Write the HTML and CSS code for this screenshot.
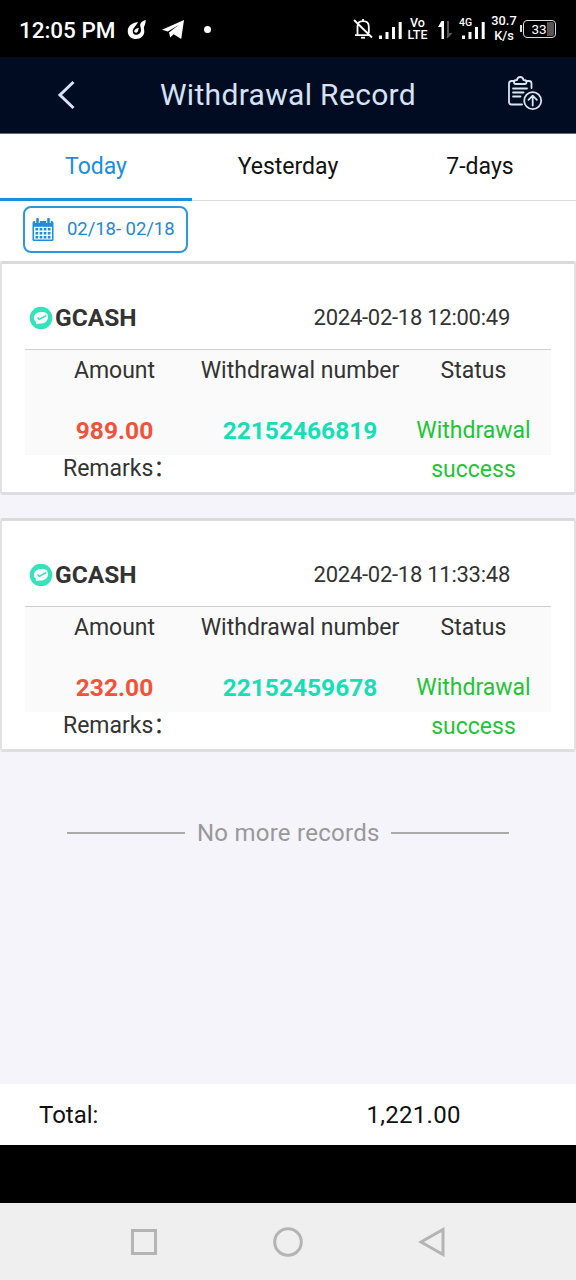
FILE: index.html
```html
<!DOCTYPE html>
<html lang="en">
<head>
<meta charset="utf-8">
<title>Withdrawal Record</title>
<link rel="stylesheet" href="styles.css">
</head>
<body>
<div class="status-bar">
  <span class="clock">12:05 PM</span>
  <svg class="flame" width="20" height="22" viewBox="0 0 20 22"><path d="M18.800 1C14 2.500 12.500 4.500 13.500 8c.8 3 1 6-2.500 7.500-3.500 1-6-1-5-4.500C6.600 8.500 9 7 11 3 4 4 .5 7.500.8 13c.3 4.500 4 7 8 7 5 0 8.700-3.500 8.500-8-.1-2-.7-3-.2-4.500C18 6 18.600 4 18.800 1z" fill="#fff"/><path d="M7 12.500c.5-2 2.500-3.500 5-3.500-1 1.500-.5 2.500-1.500 4-1 1-2 1-3.500-.5z" fill="#fff"/></svg>
  <svg class="plane" width="24" height="22" viewBox="0 0 24 22"><path d="M1 10.800 23 1l-2.800 19-7.500-4.800-3.500 3.300-1.200-5L17.500 6 6.800 12.600z" fill="#fff"/></svg>
  <i class="dot"></i>
  <div class="indicators">
    <svg class="bell" width="20" height="22" viewBox="0 0 20 22" fill="none" stroke="#fff" stroke-width="1.800"><path d="M2 17.200h15M4.500 17V8.500C4.500 5 6.500 3.200 10 3.200s5.800 2 5.800 5.300V15M10 3V1M1 2l18 17.500"/><path d="M8 19.700h4"/></svg>
    <svg class="bars" width="23" height="19" viewBox="0 0 23 19" fill="#fff"><path d="M0 14.500h3V18H0zM6.500 11h3v7h-3zM13 6h3v12h-3zM19.700 1h3v17h-3z"/></svg>
    <div class="stack volte"><span>Vo</span><span>LTE</span></div>
    <svg class="updown" width="15" height="20" viewBox="0 0 15 20"><path d="M3.500 1H6v18H3.500V7H0z" fill="#fff"/><path d="M9 1h2v12h3.500L9 19z" fill="#555"/></svg>
    <div class="mobile"><span>4G</span><svg width="23" height="19" viewBox="0 0 23 19" fill="#fff"><path d="M0 14.500h3V18H0zM6.500 11h3v7h-3zM13 6h3v12h-3zM19.700 1h3v17h-3z"/></svg></div>
    <div class="stack speed"><span>30.7</span><span>K/s</span></div>
    <div class="battery"><span>33</span></div>
  </div>
</div>

<header class="header">
  <svg class="back" width="20" height="30" viewBox="0 0 20 30"><path d="M18.500 2 5 15l13.500 13" fill="none" stroke="#d5e2f7" stroke-width="3"/></svg>
  <h1>Withdrawal Record</h1>
  <svg class="report" width="36" height="36" viewBox="0 0 36 36" fill="none" stroke="#d9e5f0" stroke-width="1.800" stroke-linecap="round" stroke-linejoin="round"><path d="M7 5H4.500Q2 5 2 7.500V26q0 2.500 2.500 2.500H15M19.500 5H22q2.500 0 2.500 2.500V12M7 6.500Q7 4 9.500 4H10Q10.500 1 13.200 1T16.500 4h.5q2.500 0 2.500 2.500Q19.500 8 18 8H8.500Q7 8 7 6.500zM6 12.500h14M6 16.500h10.500M6 20.500h7.500"/><circle cx="25.700" cy="24.700" r="8.500"/><path d="M25.700 29.500V20M21.500 23.800l4.200-4.200 4.200 4.200"/></svg>
</header>

<nav class="tabs"><span class="tab active">Today</span><span class="tab">Yesterday</span><span class="tab">7-days</span></nav>

<div class="filter">
  <div class="date-range">
    <svg width="22" height="24" viewBox="0 0 22 24"><path d="M2.500 3h17Q21.500 3 21.500 5v16.500q0 1.500-1.500 1.500H2Q.5 23 .5 21.500V5q0-2 2-2z" fill="#1c8edb"/><path d="M2 8.800h18v12.700H2z" fill="#fff"/><path d="M5.500 0v5M16.500 0v5" stroke="#fff" stroke-width="4.500"/><path d="M5.500 1v3.500M16.500 1v3.500" stroke="#1c8edb" stroke-width="2.600" stroke-linecap="round"/><path d="M3.500 11.200h15M3.500 15.200h15M3.500 19.200h15" stroke="#1c8edb" stroke-width="2.500" stroke-dasharray="2.700 1.400"/></svg>
    <span>02/18- 02/18</span>
  </div>
</div>

<main class="list">
  <section class="card">
    <div class="card-head">
      <svg width="24" height="24" viewBox="0 0 24 24"><circle cx="12" cy="12" r="11.300" fill="#34e3b9"/><path d="M5 10.500C6 7 10 5.500 14 6c4 .3 5.500 3 5 6-.7 4-4.500 5.700-8 5.500L7 18l-.5-3C5 14 4.500 12.500 5 10.500z" fill="#fff"/><path d="m8.500 11.500 1.800 1.800 7-3.800" fill="none" stroke="#34e3b9" stroke-width="1.500"/></svg>
      <b>GCASH</b><time>2024-02-18 12:00:49</time>
    </div>
    <div class="grid">
      <span>Amount</span><span>Withdrawal number</span><span>Status</span>
      <span class="value amount">989.00</span><span class="value number">22152466819</span><span class="value state">Withdrawal<br>success</span>
    </div>
    <div class="remarks">Remarks：</div>
  </section>
  <section class="card second">
    <div class="card-head">
      <svg width="24" height="24" viewBox="0 0 24 24"><circle cx="12" cy="12" r="11.300" fill="#34e3b9"/><path d="M5 10.500C6 7 10 5.500 14 6c4 .3 5.500 3 5 6-.7 4-4.500 5.700-8 5.500L7 18l-.5-3C5 14 4.500 12.500 5 10.500z" fill="#fff"/><path d="m8.500 11.500 1.800 1.800 7-3.800" fill="none" stroke="#34e3b9" stroke-width="1.500"/></svg>
      <b>GCASH</b><time>2024-02-18 11:33:48</time>
    </div>
    <div class="grid">
      <span>Amount</span><span>Withdrawal number</span><span>Status</span>
      <span class="value amount">232.00</span><span class="value number">22152459678</span><span class="value state">Withdrawal<br>success</span>
    </div>
    <div class="remarks">Remarks：</div>
  </section>
  <div class="end"><i></i><span>No more records</span><i></i></div>
</main>

<footer class="total"><span>Total:</span><span class="sum">1,221.00</span></footer>
<div class="spacer"></div>
<div class="system-nav">
  <svg width="28" height="28" viewBox="0 0 28 28"><path d="M2.500 2.500h23v23h-23z"/></svg>
  <svg width="30" height="30" viewBox="0 0 30 30"><circle cx="15" cy="15" r="13.300"/></svg>
  <svg width="28" height="30" viewBox="0 0 28 30"><path d="M25 2.500v25L3 15z"/></svg>
</div>
</body>
</html>
```
FILE: styles.css
```css
* { box-sizing: border-box; }
body { margin: 0; width: 576px; height: 1280px; display: flex; flex-direction: column; overflow: hidden; background: #f4f4fa; color: #333; font-family: Roboto, "Noto Sans CJK SC", sans-serif; font-size: 23px; }
svg { display: block; flex: none; }

.status-bar { height: 57px; flex: none; background: #000; color: #fff; display: flex; align-items: center; padding: 2px 20px 0 19px; }
.clock { font-size: 22.500px; font-weight: 500; width: 108px; letter-spacing: -.05px; white-space: nowrap; }
.plane { margin-left: 14px; }
.dot { width: 7px; height: 7px; border-radius: 50%; background: #fff; margin-left: 19px; margin-top: -1px; }
.indicators { margin-left: auto; display: flex; align-items: center; }
.bell { margin-top: -2px; }
.bars { margin-left: 6px; margin-top: 1px; }
.stack { display: flex; flex-direction: column; align-items: center; font-weight: 500; }
.volte { font-size: 12.500px; line-height: 12px; margin-left: 5px; width: 21px; margin-top: -2px; }
.volte span { height: 11px; line-height: 11px; }
.volte span + span { margin-top: 1px; }
.updown { margin-left: 10px; }
.mobile { position: relative; margin-left: 9px; margin-top: 1px; }
.mobile span { position: absolute; left: -3px; top: -4px; font-size: 10.500px; line-height: 12px; font-weight: 500; }
.speed { font-size: 12.800px; line-height: 15px; width: 26px; margin-left: 6px; margin-top: -3px; }
.battery { position: relative; width: 33px; height: 18px; margin-left: 6px; margin-top: -2px; border: 1.500px solid #ddd; border-radius: 4px; font-size: 13.500px; background: linear-gradient(90deg, #000 76%, #555 76%) content-box; padding: 1px; }
.battery span { display: block; margin-top: -1px; padding-right: 1px; line-height: 16px; text-align: center; }
.battery::before { content: ""; position: absolute; left: -4px; top: 4px; width: 2px; height: 7px; background: #ddd; }

.header { height: 77px; flex: none; background: #010c22; display: flex; align-items: center; padding: 0 33px 0 55px; border-bottom: 1px solid #62667a; }
.header h1 { margin: -2px 0 0; padding-right: 6px; flex: 1; text-align: center; font-size: 30px; font-weight: 400; letter-spacing: .32px; color: #d5e2f7; white-space: nowrap; }
.report { margin-top: -3px; }

.tabs { height: 67px; flex: none; display: grid; grid-template-columns: repeat(3, 1fr); background: #fff; border-bottom: 1px solid #dcdcdc; }
.tab { color: #111; text-align: center; height: 67px; line-height: 65px; }
.tab.active { color: #1c8edb; border-bottom: 3px solid #1c8edb; }
.filter { height: 60px; flex: none; background: #fff; padding: 5px 23px; }
.date-range { width: 165px; height: 47px; border: 2px solid #2c97dc; border-radius: 8px; display: flex; align-items: center; padding-left: 7px; gap: 13px; color: #2088d2; font-size: 18.500px; white-space: nowrap; }
.date-range span { margin-top: -2px; letter-spacing: -.05px; }

.list { flex: 1; }
.card { height: 234px; background: #fff; border: 2px solid #e2e2e4; border-top: 3px solid #dadadb; border-bottom: 3px solid #dedee0; border-radius: 3px; padding: 0 23px; }
.card.second { margin-top: 23px; }
.card-head { height: 86px; border-bottom: 1px solid #cfcfcf; display: flex; align-items: center; padding: 22px 41px 0 4px; }
.card-head b { font-size: 24.500px; margin-left: 2px; }
.card-head time { margin-left: auto; font-size: 22px; letter-spacing: -.26px; }
.grid { height: 105px; background: #fafafa; display: grid; grid-template-columns: 179px 192px 155px; grid-template-rows: 40px 77px; }
.grid > span { display: flex; justify-content: center; white-space: nowrap; line-height: 39px; padding-top: 1px; }
.grid .value { padding-top: 21px; text-align: center; }
.amount, .number { font-weight: 700; font-size: 24.500px; }
.grid .amount { color: #f0533a; }
.grid .number { color: #16dfb5; }
.grid .state { color: #1fc437; display: block; }
.remarks { line-height: 28px; height: 26px; padding-left: 38px; white-space: nowrap; }
.end { display: flex; justify-content: center; align-items: center; gap: 12px; margin-top: 64px; height: 34px; color: #999; font-size: 24px; }
.end span { letter-spacing: .26px; margin-right: -.5px; margin-top: -1px; }
.end i { width: 118px; height: 2px; background: #aaa; }

.total { height: 61px; flex: none; background: #fff; color: #111; font-size: 24px; display: flex; align-items: center; padding: 0 39px; }
.sum { margin-left: 268px; letter-spacing: .3px; }
.spacer { height: 58px; flex: none; background: #000; }
.system-nav { height: 77px; flex: none; background: #efefef; display: flex; align-items: center; justify-content: space-between; padding: 0 130px; }
.system-nav svg { fill: none; stroke: #b4b4b4; stroke-width: 3px; }
```
